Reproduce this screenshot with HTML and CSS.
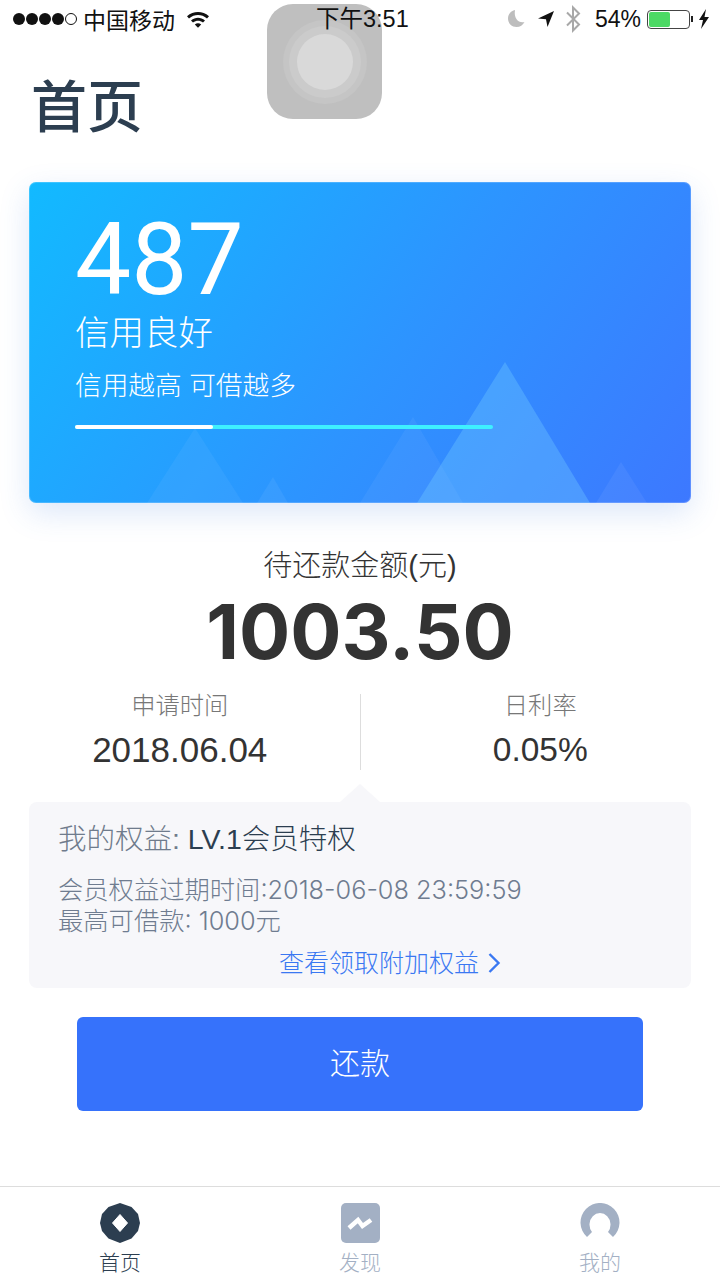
FILE: index.html
```html
<!DOCTYPE html>
<html lang="zh-CN">
<head>
    <meta charset="UTF-8">
    <meta name="viewport" content="width=device-width, initial-scale=1.0">
    <title>首页</title>
    <link rel="stylesheet" href="styles.css">
</head>
<body>
    <div class="app">
        <div class="touch-button">
            <div class="touch-ring-outer"><div class="touch-ring-inner"><div class="touch-core"></div></div></div>
        </div>

        <div class="status-bar">
            <div class="status-left">
                <span class="signal">
                    <i class="dot"></i><i class="dot"></i><i class="dot"></i><i class="dot"></i><i class="dot empty"></i>
                </span>
                <span class="carrier">中国移动</span>
                <svg class="wifi" width="24" height="18" viewBox="0 0 24 18">
                    <path d="M1 6.200C7.500 .6 16.500 .6 23 6.200l-2 2.200C15.500 3.800 8.500 3.800 3 8.400z" fill="#111"/>
                    <path d="M5 10.400c4.400-3.600 9.600-3.600 14 0l-2 2.100c-3.200-2.500-6.800-2.500-10 0z" fill="#111"/>
                    <path d="M8.800 14.400c2-1.400 4.400-1.400 6.400 0L12 17.800z" fill="#111"/>
                </svg>
            </div>
            <div class="status-time">下午3:51</div>
            <div class="status-right">
                <svg class="moon" width="20" height="22" viewBox="0 0 20 22">
                    <path d="M8 2C3.500 3 1 6.500 1 10.500 1 15.500 5 19 9.500 19c3.500 0 6.500-2 8-5-5.500 1.500-11-3-9.500-12z" fill="#bdbdbd"/>
                </svg>
                <svg class="arrow" width="18" height="18" viewBox="0 0 18 18">
                    <path d="M17 1L1 8.500l8 .8 1.500 7.700z" fill="#111"/>
                </svg>
                <svg class="bluetooth" width="16" height="28" viewBox="0 0 16 28">
                    <path d="M2 7.500l12 12-6 6V2.500l6 6-12 12" fill="none" stroke="#a8a8a8" stroke-width="2"/>
                </svg>
                <span class="battery-text">54%</span>
                <span class="battery"><span class="battery-level"></span></span>
                <span class="battery-tip"></span>
                <svg class="bolt" width="12" height="20" viewBox="0 0 12 20">
                    <path d="M8 0L1 11h4l-2 9 8-12H6.500z" fill="#111"/>
                </svg>
            </div>
        </div>

        <h1 class="page-title">首页</h1>

        <div class="credit-card">
            <svg class="mountains" width="662" height="321" viewBox="0 0 662 321">
                <polygon points="118,321 166,246 214,321" fill="#fff" opacity="0.05"/>
                <polygon points="228,321 244,295 259,321" fill="#fff" opacity="0.06"/>
                <polygon points="331,321 384,235 434,321" fill="#fff" opacity="0.05"/>
                <polygon points="388,321 476,180 561,321" fill="#7fd8ff" opacity="0.3"/>
                <polygon points="567,321 592,280 618,321" fill="#fff" opacity="0.06"/>
            </svg>
            <div class="credit-score">487</div>
            <div class="credit-level">信用良好</div>
            <div class="credit-tip">信用越高 可借越多</div>
            <div class="credit-bar"><div class="credit-bar-fill"></div></div>
        </div>

        <div class="amount-label">待还款金额(元)</div>
        <div class="amount-value">1003.50</div>

        <div class="info-row">
            <div class="info-item">
                <div class="info-label">申请时间</div>
                <div class="info-value">2018.06.04</div>
            </div>
            <div class="info-item">
                <div class="info-label">日利率</div>
                <div class="info-value rate">0.05%</div>
            </div>
        </div>

        <div class="rights">
            <div class="rights-title">我的权益: <span class="rights-level">LV.1会员特权</span></div>
            <div class="rights-text">会员权益过期时间:2018-06-08 23:59:59</div>
            <div class="rights-text">最高可借款: 1000元</div>
            <div class="rights-link">查看领取附加权益
                <svg width="14" height="22" viewBox="0 0 14 22"><path d="M2.500 2l9 9-9 9" fill="none" stroke="#3a78f2" stroke-width="2.400"/></svg>
            </div>
        </div>

        <div class="repay-button">还款</div>

        <div class="tab-bar">
            <div class="tab active">
                <svg width="40" height="40" viewBox="0 0 40 40">
                    <path d="M20 0l11.500 4 6.500 7 2 9-2 8-6.500 7.500L20 40 8.500 35.500 2 28l-2-8 2-9 6.500-7z" fill="#2c3e50"/>
                    <path d="M20 11.500l7.500 8.500-7.500 8.500-7.500-8.500z" fill="#fff" stroke="#fff" stroke-linejoin="round"/>
                </svg>
                <span>首页</span>
            </div>
            <div class="tab">
                <svg width="40" height="40" viewBox="0 0 40 40">
                    <rect x="1" width="39" height="40" rx="5" fill="#a3b0c4"/>
                    <path d="M9 25l9-8 4.500 6L31 17" fill="none" stroke="#fff" stroke-width="4.500"/>
                </svg>
                <span>发现</span>
            </div>
            <div class="tab">
                <svg width="40" height="40" viewBox="0 0 40 40">
                    <path d="M7 34A19.500 19.500 0 1 1 33 34L28 29A10.500 11.500 0 1 0 12 29Z" fill="#a3b0c4"/>
                </svg>
                <span>我的</span>
            </div>
        </div>
    </div>
</body>
</html>
```

FILE: styles.css
```css
* {
    box-sizing: border-box;
}
html, body {
    margin: 0;
    padding: 0;
}
body {
    font-family: "Liberation Sans", "Noto Sans CJK SC", sans-serif;
    background-color: #fff;
}
.app {
    position: relative;
    width: 720px;
    height: 1280px;
    overflow: hidden;
    display: flex;
    flex-direction: column;
}

/* 悬浮按钮 */
.touch-button {
    position: absolute;
    left: 267px;
    top: 4px;
    width: 115px;
    height: 115px;
    border-radius: 26px;
    background-color: #bfbfbf;
    display: flex;
    align-items: center;
    justify-content: center;
}
.touch-ring-outer {
    width: 84px;
    height: 84px;
    border-radius: 50%;
    background-color: #c5c5c5;
    display: flex;
    align-items: center;
    justify-content: center;
}
.touch-ring-inner {
    width: 72px;
    height: 72px;
    border-radius: 50%;
    background-color: #cbcbcb;
    display: flex;
    align-items: center;
    justify-content: center;
}
.touch-core {
    width: 56px;
    height: 56px;
    border-radius: 50%;
    background-color: #d9d9d9;
}

/* 状态栏 */
.status-bar {
    position: relative;
    height: 40px;
    display: flex;
    align-items: center;
    justify-content: space-between;
    padding: 0 10px 2px 13px;
    color: #111;
    font-size: 23px;
}
.status-left, .status-right {
    display: flex;
    align-items: center;
}
.signal {
    display: flex;
    gap: 1px;
    margin-right: 6px;
}
.dot {
    width: 12px;
    height: 12px;
    border-radius: 50%;
    background-color: #111;
}
.dot.empty {
    background-color: transparent;
    border: 1px solid #111;
}
.wifi {
    margin-left: 11px;
}
.status-time {
    position: absolute;
    left: 316px;
    top: 4px;
    line-height: 30px;
    font-size: 23.500px;
}
.moon {
    margin-right: 10px;
}
.arrow {
    margin-right: 10px;
}
.bluetooth {
    margin-right: 14px;
}
.battery-text {
    margin-right: 6px;
}
.battery {
    width: 43px;
    height: 19px;
    border: 1px solid #444;
    border-radius: 4px;
    padding: 1px;
    display: block;
}
.battery-level {
    display: block;
    width: 54%;
    height: 100%;
    background-color: #4cd964;
    border-radius: 2px;
}
.battery-tip {
    width: 2px;
    height: 6px;
    background-color: #222;
    margin: 0 5px 0 1px;
}

.page-title {
    margin: 33px 0 0 31px;
    font-size: 56px;
    line-height: 70px;
    font-weight: 500;
    color: #2c3e50;
}

/* 信用卡片 */
.credit-card {
    position: relative;
    margin: 39px 29px 0;
    height: 321px;
    padding: 28px 46px 0;
    border-radius: 7px;
    overflow: hidden;
    color: #fff;
    background: linear-gradient(125deg, #12baff 0%, #2d94ff 55%, #3d78ff 100%);
    box-shadow: 0 10px 30px rgba(60, 120, 220, 0.18), inset 0 0 0 1px rgba(255, 255, 255, 0.18);
}
.mountains {
    position: absolute;
    left: 0;
    top: 0;
}
.credit-score {
    position: relative;
    font-family: "Roboto", "Liberation Sans", sans-serif;
    font-weight: 400;
    font-size: 100px;
    line-height: 100px;
}
.credit-level {
    position: relative;
    font-size: 34.500px;
    font-weight: 300;
    line-height: 44px;
    margin-top: 1px;
}
.credit-tip {
    position: relative;
    font-size: 26.700px;
    font-weight: 300;
    line-height: 36px;
    margin-top: 13px;
}
.credit-bar {
    position: relative;
    width: 418px;
    height: 4px;
    margin-top: 21px;
    border-radius: 2px;
    background-color: #3ef0ff;
}
.credit-bar-fill {
    width: 138px;
    height: 100%;
    border-radius: 2px;
    background-color: #fff;
}

/* 金额 */
.amount-label {
    margin-top: 43px;
    text-align: center;
    font-size: 29px;
    font-weight: 300;
    line-height: 40px;
    color: #333;
}
.amount-value {
    margin-top: 6px;
    text-align: center;
    font-family: "Inter", "Liberation Sans", sans-serif;
    font-size: 76px;
    font-weight: 700;
    line-height: 78px;
    color: #333;
}
.info-row {
    display: flex;
    margin-top: 24px;
}
.info-item {
    flex: 1;
    height: 76px;
    text-align: center;
}
.info-item + .info-item {
    border-left: 1px solid #ddd;
}
.info-label {
    font-size: 24.300px;
    font-weight: 300;
    line-height: 24px;
    color: #777;
}
.info-value {
    margin-top: 12px;
    font-size: 35px;
    line-height: 40px;
    color: #333;
}
.info-value.rate {
    font-size: 33.500px;
}

/* 权益 */
.rights {
    position: relative;
    margin: 32px 29px 0;
    height: 186px;
    padding: 19px 29px 0;
    border-radius: 8px;
    background-color: #f7f7fa;
}
.rights::before {
    content: "";
    position: absolute;
    left: 311px;
    top: -18px;
    border-left: 20px solid transparent;
    border-right: 20px solid transparent;
    border-bottom: 18px solid #f7f7fa;
}
.rights-title {
    font-size: 28.500px;
    font-weight: 300;
    line-height: 36px;
    color: #6f7b8c;
}
.rights-level {
    color: #2c3e50;
}
.rights-text {
    font-family: "Inter", "Noto Sans CJK SC", sans-serif;
    font-size: 25.300px;
    font-weight: 300;
    line-height: 31px;
    color: #6f7c90;
}
.rights-title + .rights-text {
    margin-top: 17px;
}
.rights-link {
    display: flex;
    align-items: center;
    justify-content: flex-end;
    gap: 8px;
    margin: 12px 161px 0 0;
    font-size: 25px;
    font-weight: 300;
    line-height: 30px;
    color: #3a78f2;
    white-space: nowrap;
}

.repay-button {
    margin: 29px 77px 0;
    height: 94px;
    border-radius: 6px;
    background-color: #3672fb;
    color: #fff;
    font-size: 30px;
    font-weight: 300;
    line-height: 94px;
    text-align: center;
}

/* 底部导航 */
.tab-bar {
    margin-top: auto;
    height: 94px;
    display: flex;
    border-top: 1px solid #ddd;
    padding-top: 16px;
}
.tab {
    flex: 1;
    display: flex;
    flex-direction: column;
    align-items: center;
    font-size: 21px;
    font-weight: 300;
    line-height: 30px;
    color: #a3b0c4;
}
.tab span {
    margin-top: 5px;
}
.tab.active {
    color: #2c3e50;
}
```
